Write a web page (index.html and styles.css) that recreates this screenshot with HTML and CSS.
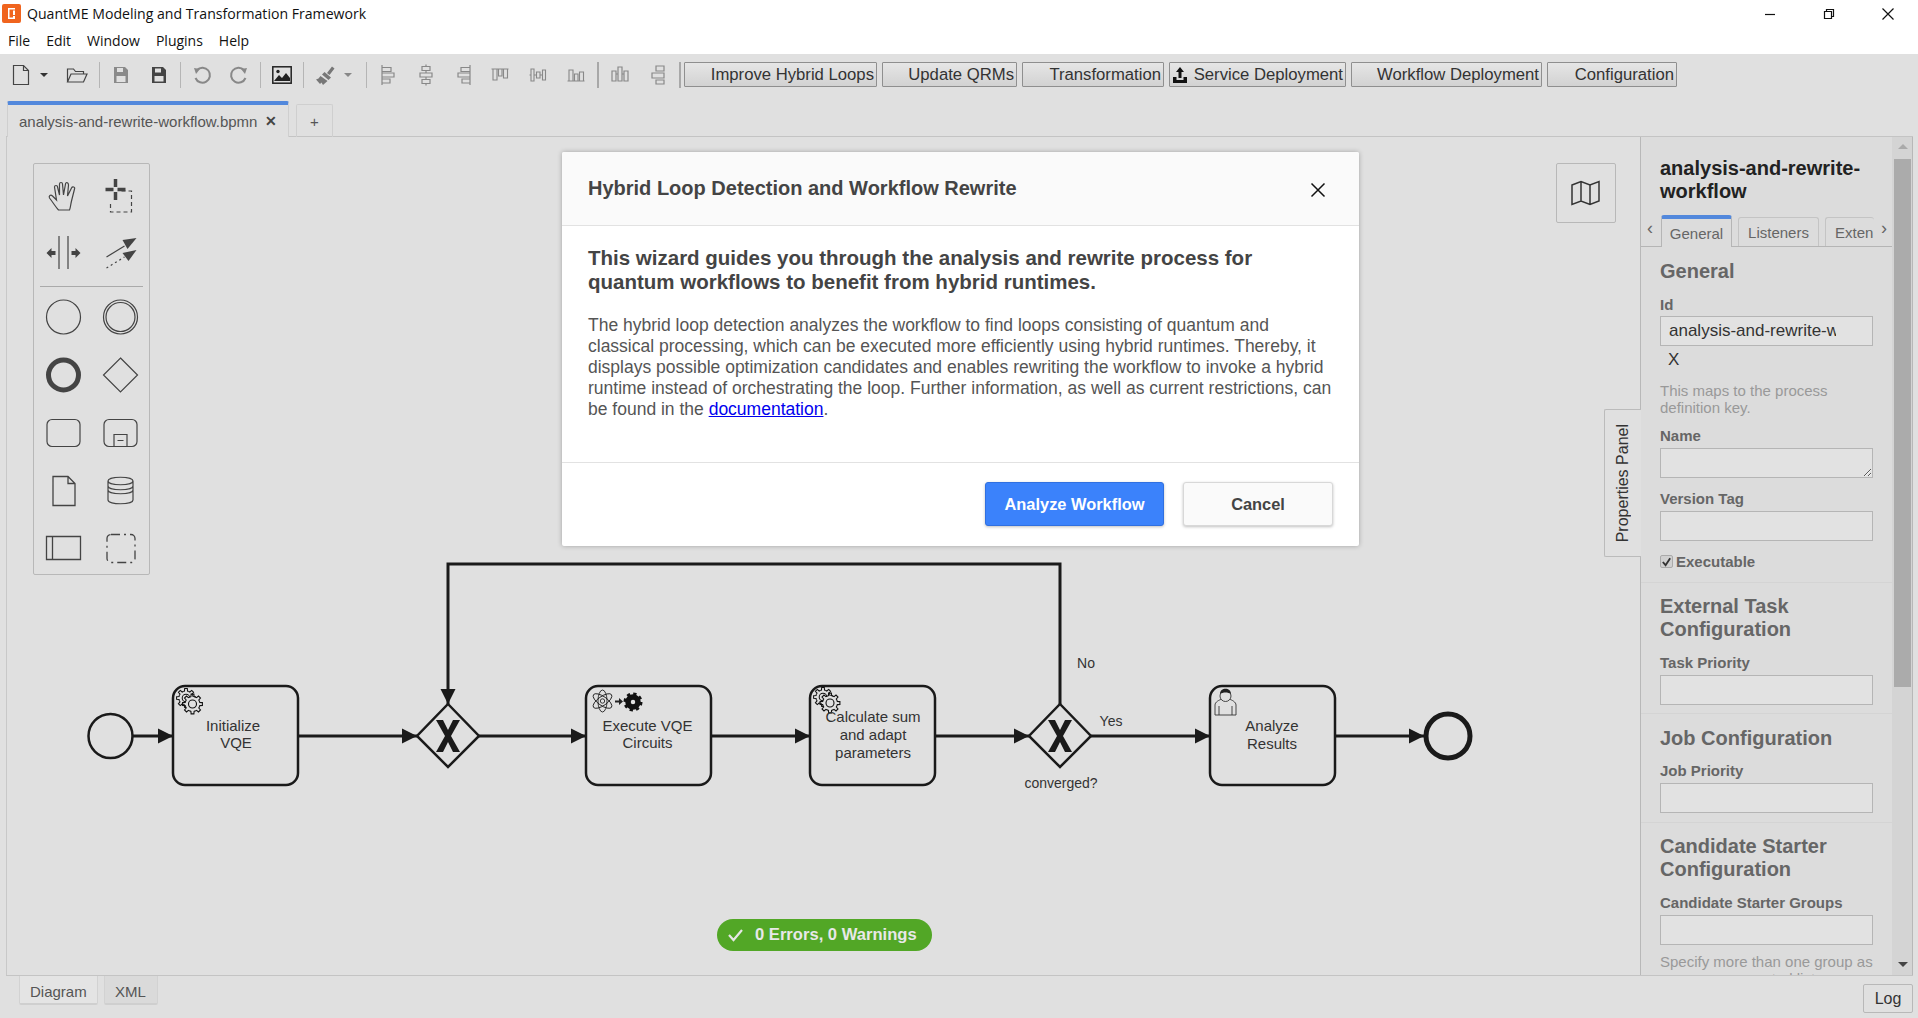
FILE: index.html
```html
<!DOCTYPE html>
<html lang="en">
<head>
<meta charset="utf-8">
<title>QuantME Modeling and Transformation Framework</title>
<link rel="stylesheet" href="styles.css">
</head>
<body>
<div class="app">
  <header class="titlebar">
    <svg class="app-icon" width="19" height="19" viewBox="0 0 19 19"><rect width="19" height="19" rx="2" fill="#f0641e"/><path d="M6 4h7v1.500H7.500v8H13V15H6z" fill="#fff"/><path d="M11 6.500h2V11h-2zM11 12h2v2h-2z" fill="#fff"/></svg>
    <span class="title-text">QuantME Modeling and Transformation Framework</span>
    <div class="win-controls">
      <span class="win-btn"><svg width="14" height="14" viewBox="0 0 14 14"><path d="M2 7.500h10" stroke="#111" stroke-width="1.200"/></svg></span>
      <span class="win-btn"><svg width="14" height="14" viewBox="0 0 14 14"><path d="M2.500 4.500h7v7h-7zM4.500 4.500v-2h7v7h-2" fill="none" stroke="#111" stroke-width="1.200"/></svg></span>
      <span class="win-btn"><svg width="14" height="14" viewBox="0 0 14 14"><path d="M1.500 1.500l11 11M12.500 1.500l-11 11" stroke="#111" stroke-width="1.200"/></svg></span>
    </div>
  </header>
  <nav class="menubar"><span>File</span><span>Edit</span><span>Window</span><span>Plugins</span><span>Help</span></nav>

  <div class="toolbar">
    <span class="ti ti-new"><svg width="18" height="22" viewBox="0 0 18 22"><path d="M1.500 1.500h10l5 5v14h-15z" fill="none" stroke="#444" stroke-width="1.200"/><path d="M11.500 1.500v5h5" fill="none" stroke="#444" stroke-width="1.200"/></svg></span>
    <span class="caret"></span>
    <span class="ti ti-open"><svg width="22" height="18" viewBox="0 0 22 18"><path d="M1.500 16V3h6l2 2.500h8V8M1.500 16l3.500-8h16l-3.500 8z" fill="none" stroke="#444" stroke-width="1.200"/></svg></span>
    <span class="sep"></span>
    <span class="ti"><svg width="16" height="18" viewBox="0 0 16 18"><path d="M1 1h11l3 3v13H1z" fill="#8a8a8a"/><path d="M4 2h6v4H4zM3.500 10h9v6h-9z" fill="#e0e0e0"/></svg></span>
    <span class="ti"><svg width="16" height="18" viewBox="0 0 16 18"><path d="M1 1h11l3 3v13H1z" fill="#444"/><path d="M4 2.500h6v4H4zM3.500 10h9v5.500h-9z" fill="#e0e0e0"/></svg></span>
    <span class="sep"></span>
    <span class="ti"><svg width="20" height="20" viewBox="0 0 20 20"><path d="M5 5a7.500 7.500 0 1 1-1.500 8" fill="none" stroke="#888" stroke-width="2"/><path d="M2 3l6 1-4 5z" fill="#888"/></svg></span>
    <span class="ti ti-redo"><svg width="20" height="20" viewBox="0 0 20 20"><path d="M15 5a7.500 7.500 0 1 0 1.500 8" fill="none" stroke="#888" stroke-width="2"/><path d="M18 3l-6 1 4 5z" fill="#888"/></svg></span>
    <span class="sep"></span>
    <span class="ti"><svg width="20" height="18" viewBox="0 0 20 18"><rect x=".800" y=".800" width="18.400" height="16.400" fill="#e0e0e0" stroke="#222" stroke-width="1.500"/><path d="M2 15l5-6 3 3 4-5 4 5v3z" fill="#222"/><circle cx="6" cy="5.500" r="1.700" fill="#222"/></svg></span>
    <span class="sep"></span>
    <span class="ti"><svg width="20" height="20" viewBox="0 0 20 20"><path d="M12 8L17 1.500l2.500 2L14.500 10zM9.500 7l6.500 5.500-2.500 2.500L7 9.500zM5.500 11l7 5-4.500 4-1.500-2.500-1.500 1.500-4-4.500 2.500-1z" fill="#777"/></svg></span>
    <span class="caret caret-gray"></span>
    <span class="sep sep-wide"></span>
    <span class="ti"><svg width="14" height="22" viewBox="0 0 14 22"><path d="M1 1v20M1 3.500h9v4H1M1 9h12v4H1M1 15h8v4H1" fill="none" stroke="#888" stroke-width="1.200"/></svg></span>
    <span class="ti"><svg width="14" height="22" viewBox="0 0 14 22"><path d="M3 2.500h8v4H3zM1 9h12v4H1zM3 15.500h8v4H3zM7 .5v2M7 6.500V9M7 13v2.500M7 19.500v2" fill="none" stroke="#888" stroke-width="1.200"/></svg></span>
    <span class="ti"><svg width="14" height="22" viewBox="0 0 14 22"><path d="M13 1v20M13 3.500H4v4h9M13 9H1v4h12M13 15H5v4h8" fill="none" stroke="#888" stroke-width="1.200"/></svg></span>
    <span class="ti ti-dist"><svg width="18" height="14" viewBox="0 0 18 14"><path d="M.5 1h17M2 1v11h4V1M7.500 1v7h3.500V1M12.500 1v9h4V1" fill="none" stroke="#888" stroke-width="1.100"/></svg></span>
    <span class="ti"><svg width="18" height="14" viewBox="0 0 18 14"><path d="M2 1h3v12H2zM7.500 4H11v6H7.500zM13.500 2h3v10h-3zM.5 7h1.500M5 7h2.500M11 7h2.500" fill="none" stroke="#888" stroke-width="1.100"/></svg></span>
    <span class="ti"><svg width="18" height="14" viewBox="0 0 18 14"><path d="M.5 13h17M2 13V2h4v11M7.500 13V6h3.500v7M12.500 13V4h4v9" fill="none" stroke="#888" stroke-width="1.100"/></svg></span>
    <span class="sep sep-alt"></span>
    <span class="ti"><svg width="18" height="18" viewBox="0 0 18 18"><path d="M1 5h4v10H1zM7 1h4v14H7zM13 5h4v10h-4zM5 8h2M11 8h2" fill="none" stroke="#888" stroke-width="1.200"/></svg></span>
    <span class="ti"><svg width="14" height="20" viewBox="0 0 14 20"><path d="M5 1h8v5H5zM1 8h12v5H1zM5 15h8v4H5z" fill="none" stroke="#888" stroke-width="1.200"/></svg></span>
    <span class="sep sep-alt sep-last"></span>
    <button class="tool-btn btn-hybrid">Improve Hybrid Loops</button>
    <button class="tool-btn btn-qrm">Update QRMs</button>
    <button class="tool-btn btn-trans">Transformation</button>
    <button class="tool-btn btn-service"><svg width="16" height="18" viewBox="0 0 16 18"><path d="M8 1l4 5H9.500v6h-3V6H4zM1 11h3.500v3h7v-3H15v6H1z" fill="#111"/></svg>Service Deployment</button>
    <button class="tool-btn btn-work">Workflow Deployment</button>
    <button class="tool-btn btn-conf">Configuration</button>
  </div>

  <div class="tabbar">
    <div class="tab tab-active"><span>analysis-and-rewrite-workflow.bpmn</span><span class="tab-close">✕</span></div>
    <div class="tab tab-plus">+</div>
  </div>

  <main class="workspace">
    <section class="canvas">
      <svg class="diagram" viewBox="6 137 1635 838" width="1635" height="838">
        <defs>
          <path id="seg" d="M-2.900-6.900L-1.600-7.300-1.400-9.900H1.400L1.600-7.300 2.900-6.900"/>
          <g id="gear" fill="none" stroke="#111" stroke-width="1.100">
            <circle r="7.300" fill="#e0e0e0" stroke="none"/>
            <use href="#seg"/><use href="#seg" transform="rotate(45)"/><use href="#seg" transform="rotate(90)"/><use href="#seg" transform="rotate(135)"/><use href="#seg" transform="rotate(180)"/><use href="#seg" transform="rotate(225)"/><use href="#seg" transform="rotate(270)"/><use href="#seg" transform="rotate(315)"/>
            <circle r="4"/>
          </g>
          <g id="arrow"><path d="M0 0l-15-7.500v15z" fill="#1a1a1a"/></g>
        </defs>
        <g fill="none" stroke="#1a1a1a" stroke-width="3">
          <path d="M133 736H173M298 736H417M479 736H586M711 736H810M935 736H1029M1091 736H1210M1335 736H1424"/>
          <path d="M1060 704V564H448V704"/>
        </g>
        <use href="#arrow" transform="translate(173,736)"/>
        <use href="#arrow" transform="translate(417,736)"/>
        <use href="#arrow" transform="translate(586,736)"/>
        <use href="#arrow" transform="translate(810,736)"/>
        <use href="#arrow" transform="translate(1029,736)"/>
        <use href="#arrow" transform="translate(1210,736)"/>
        <use href="#arrow" transform="translate(1424,736)"/>
        <use href="#arrow" transform="translate(448,704) rotate(90)"/>
        <circle cx="110.500" cy="736" r="22" fill="#e0e0e0" stroke="#1a1a1a" stroke-width="2.500"/>
        <circle cx="1448" cy="736" r="22" fill="#e0e0e0" stroke="#1a1a1a" stroke-width="5"/>
        <g fill="#e0e0e0" stroke="#1a1a1a" stroke-width="2.500">
          <rect x="173" y="686" width="125" height="99" rx="12"/>
          <rect x="586" y="686" width="125" height="99" rx="12"/>
          <rect x="810" y="686" width="125" height="99" rx="12"/>
          <rect x="1210" y="686" width="125" height="99" rx="12"/>
          <path d="M448 704l31 32-31 31-31-31z"/>
          <path d="M1060 704l31 32-31 31-31-31z"/>
        </g>
        <path d="M436 720h7l5 10 5-10h7l-9 16 9 16h-7l-5-10-5 10h-7l9-16zM1048 720h7l5 10 5-10h7l-9 16 9 16h-7l-5-10-5 10h-7l9-16z" fill="#1a1a1a"/>
        <use href="#gear" transform="translate(186,698) scale(.95)"/>
        <use href="#gear" transform="translate(192.500,704)"/>
        <use href="#gear" transform="translate(823,697) scale(.95)"/>
        <use href="#gear" transform="translate(830,703)"/>
        <g fill="none" stroke="#222" stroke-width=".9">
          <ellipse cx="602.500" cy="701" rx="11" ry="4.500" transform="rotate(35 602.500 701)"/>
          <ellipse cx="602.500" cy="701" rx="11" ry="4.500" transform="rotate(-35 602.500 701)"/>
          <ellipse cx="602.500" cy="701" rx="4.500" ry="11"/>
          <circle cx="602.500" cy="701" r="2.200"/>
        </g>
        <path d="M615 700.500h4v-2.500l4 3.500-4 3.500v-2.500h-4z" fill="#222"/>
        <g fill="none" stroke="#111" transform="translate(633,702)">
          <circle r="5" stroke-width="5.500"/>
          <circle r="8" stroke-dasharray="3.200 3.080" stroke-width="3"/>
        </g>
        <g fill="none" stroke="#333" stroke-width=".9">
          <path d="M1215 715v-10c0-3 4-5 7-6h7c3 1 7 3 7 6v10zM1219 706v9M1232 706v9"/>
          <circle cx="1225.500" cy="696" r="5.500" fill="#e0e0e0"/>
        </g>
        <path d="M1220 694c0-7 11-7 11 0-3-2-8-2-11 0z" fill="#222"/>
        <g class="task-label">
          <text x="233" y="731">Initialize</text><text x="236" y="748">VQE</text>
          <text x="647.500" y="731">Execute VQE</text><text x="647.500" y="748">Circuits</text>
          <text x="873" y="722">Calculate sum</text><text x="873" y="740">and adapt</text><text x="873" y="758">parameters</text>
          <text x="1272" y="731">Analyze</text><text x="1272" y="749">Results</text>
        </g>
        <g class="flow-label">
          <text x="1086" y="668">No</text><text x="1111" y="726">Yes</text><text x="1061" y="788">converged?</text>
        </g>
      </svg>

      <div class="palette">
        <div class="pal-row">
          <svg width="46" height="46" viewBox="0 0 46 46"><path d="M18 38c-3-3-5-7-9-12-1-2 1-4 3-2l4 4-2-13c0-2 3-2 3 0l2 8V12c0-2 3-2 3 0l1 11 2-11c0-2 3-2 3 1l-1 11 4-8c1-2 4-1 3 1l-3 12c-1 4-1 7-2 9z" fill="none" stroke="#444" stroke-width="1.200"/></svg>
          <svg width="46" height="46" viewBox="0 0 46 46"><path d="M18 7v8M18 20v8M8 17.500h8M20 17.500h8" stroke="#444" stroke-width="3.500"/><path d="M24 19h10v21H13V30" fill="none" stroke="#444" stroke-width="1.200" stroke-dasharray="4 3"/></svg>
        </div>
        <div class="pal-row">
          <svg width="46" height="46" viewBox="0 0 46 46"><path d="M18.500 6v33M27.500 6v33" stroke="#444" stroke-width="1.200"/><path d="M6 23l5-5v3h4v4h-4v3zM40 23l-5-5v3h-4v4h4v3z" fill="#444"/></svg>
          <svg width="46" height="46" viewBox="0 0 46 46"><path d="M9 27l18-11" stroke="#444" stroke-width="1.200"/><path d="M39 8l-14 2 5 9z" fill="#444"/><path d="M9 38l18-11" stroke="#444" stroke-width="1.200" stroke-dasharray="2 3"/><path d="M39 20l-14 3 6 8z" fill="#444"/></svg>
        </div>
        <div class="pal-sep"></div>
        <div class="pal-row">
          <svg width="46" height="46" viewBox="0 0 46 46"><circle cx="23" cy="23" r="17" fill="none" stroke="#444" stroke-width="1.200"/></svg>
          <svg width="46" height="46" viewBox="0 0 46 46"><circle cx="23" cy="23" r="17" fill="none" stroke="#444" stroke-width="1.200"/><circle cx="23" cy="23" r="14.500" fill="none" stroke="#444" stroke-width="1.200"/></svg>
        </div>
        <div class="pal-row">
          <svg width="46" height="46" viewBox="0 0 46 46"><circle cx="23" cy="23" r="15" fill="none" stroke="#444" stroke-width="5"/></svg>
          <svg width="46" height="46" viewBox="0 0 46 46"><path d="M23 6l17 17-17 17L6 23z" fill="none" stroke="#444" stroke-width="1.200"/></svg>
        </div>
        <div class="pal-row">
          <svg width="46" height="46" viewBox="0 0 46 46"><rect x="6.500" y="9.500" width="33" height="27" rx="5" fill="none" stroke="#444" stroke-width="1.200"/></svg>
          <svg width="46" height="46" viewBox="0 0 46 46"><rect x="6.500" y="9.500" width="33" height="27" rx="5" fill="none" stroke="#444" stroke-width="1.200"/><path d="M16.500 36.500v-12h13v12M20 30.500h6" fill="none" stroke="#444" stroke-width="1.200"/></svg>
        </div>
        <div class="pal-row">
          <svg width="46" height="46" viewBox="0 0 46 46"><path d="M12.500 8.500h15l7 7v22h-22zM27.500 8.500v7h7" fill="none" stroke="#444" stroke-width="1.300"/></svg>
          <svg width="46" height="46" viewBox="0 0 46 46"><path d="M10.500 13c0-5 25-5 25 0v19c0 5-25 5-25 0zM10.500 13c0 5 25 5 25 0M10.500 18c0 5 25 5 25 0M10.500 22c0 5 25 5 25 0" fill="none" stroke="#444" stroke-width="1.200"/></svg>
        </div>
        <div class="pal-row pal-row-last">
          <svg width="46" height="46" viewBox="0 0 46 46"><path d="M6 11.500h34v23H6zM12 11.500v23" fill="none" stroke="#444" stroke-width="1.300"/></svg>
          <svg width="46" height="46" viewBox="0 0 46 46"><rect x="9.500" y="9.500" width="28" height="28" rx="4" fill="none" stroke="#444" stroke-width="1.300" stroke-dasharray="9 4 2 4"/></svg>
        </div>
      </div>

      <div class="map-btn"><svg width="32" height="26" viewBox="0 0 32 26"><path d="M2 5l9-3.500 9 3.500 9-3.500V21l-9 3.500-9-3.500-9 3.500zM11 1.500V21M20 5v19.500" fill="none" stroke="#333" stroke-width="1.500"/></svg></div>

      <div class="status-badge"><svg width="18" height="14" viewBox="0 0 18 14"><path d="M2 7l4.500 5L15 2" fill="none" stroke="#e6e6e6" stroke-width="2.200"/></svg><span>0 Errors, 0 Warnings</span></div>

      <div class="panel-toggle"><span>Properties Panel</span></div>
    </section>

    <aside class="props">
      <div class="props-scroll">
        <div class="props-title">analysis-and-rewrite-workflow</div>
        <div class="props-tabs">
          <span class="ptab-arrow">‹</span>
          <span class="ptab ptab-active">General</span>
          <span class="ptab">Listeners</span>
          <span class="ptab ptab-cut">Exten</span>
          <span class="ptab-arrow ptab-arrow-r">›</span>
        </div>
        <div class="group group-general">
          <h3 class="group-title">General</h3>
          <label class="fld-label fld-id-label">Id</label>
          <input class="fld" type="text" value="analysis-and-rewrite-workflow">
          <div class="fld-x">X</div>
          <p class="fld-help">This maps to the process definition key.</p>
          <label class="fld-label fld-next">Name</label>
          <textarea class="fld fld-area"></textarea>
          <label class="fld-label fld-ver">Version Tag</label>
          <input class="fld" type="text">
          <div class="check-row"><span class="check-box"><svg width="12" height="12" viewBox="0 0 12 12"><path d="M2 6l3 3.500L10 2" fill="none" stroke="#333" stroke-width="2"/></svg></span><span>Executable</span></div>
        </div>
        <div class="group group-task">
          <h3 class="group-title">External Task Configuration</h3>
          <label class="fld-label fld-task-label">Task Priority</label>
          <input class="fld" type="text">
        </div>
        <div class="group group-job">
          <h3 class="group-title">Job Configuration</h3>
          <label class="fld-label fld-job-label">Job Priority</label>
          <input class="fld" type="text">
        </div>
        <div class="group group-cand">
          <h3 class="group-title">Candidate Starter Configuration</h3>
          <label class="fld-label fld-cand-label">Candidate Starter Groups</label>
          <input class="fld" type="text">
          <p class="fld-help fld-help-last">Specify more than one group as a comma separated list.</p>
        </div>
      </div>
      <div class="scrollbar">
        <span class="sb-up"></span>
        <div class="sb-thumb"></div>
        <span class="sb-down"></span>
      </div>
    </aside>
  </main>

  <footer class="footer">
    <div class="view-tab view-tab-on">Diagram</div>
    <div class="view-tab">XML</div>
    <button class="log-btn">Log</button>
  </footer>
</div>

<div class="dialog">
  <div class="dialog-head">
    <h2>Hybrid Loop Detection and Workflow Rewrite</h2>
    <svg class="dialog-x" width="16" height="16" viewBox="0 0 16 16"><path d="M1.500 1.500l13 13M14.500 1.500l-13 13" stroke="#111" stroke-width="1.500"/></svg>
  </div>
  <div class="dialog-body">
    <h4>This wizard guides you through the analysis and rewrite process for quantum workflows to benefit from hybrid runtimes.</h4>
    <p>The hybrid loop detection analyzes the workflow to find loops consisting of quantum and classical processing, which can be executed more efficiently using hybrid runtimes. Thereby, it displays possible optimization candidates and enables rewriting the workflow to invoke a hybrid runtime instead of orchestrating the loop. Further information, as well as current restrictions, can be found in the <a href="#">documentation</a>.</p>
  </div>
  <div class="dialog-foot">
    <button class="dlg-btn dlg-primary">Analyze Workflow</button>
    <button class="dlg-btn dlg-cancel">Cancel</button>
  </div>
</div>
</body>
</html>
```

FILE: styles.css
```css
* { box-sizing: border-box; }
html, body { margin: 0; height: 100%; overflow: hidden; }
body { background: #e0e0e0; font-family: "Liberation Sans", Arial, sans-serif; color: #333; }
.app { display: flex; flex-direction: column; height: 1018px; width: 1918px; }

.titlebar { height: 27px; background: #fff; display: flex; align-items: center; flex: none; }
.app-icon { margin: 0 6px 0 2px; flex: none; }
.title-text { font: 14.100px "Open Sans", sans-serif; color: #111; }
.win-controls { margin-left: auto; display: flex; padding-right: 1px; }
.win-btn { width: 59px; display: flex; justify-content: center; }

.menubar { height: 27px; background: #fff; display: flex; gap: 16px; align-items: center; padding-left: 8px; font: 14px "Open Sans", sans-serif; color: #111; flex: none; }

.toolbar { height: 41px; flex: none; display: flex; align-items: center; }
.ti { width: 38px; height: 30px; display: flex; align-items: center; justify-content: center; flex: none; }
.ti-new { width: 30px; margin-left: 6px; }
.ti-open { margin-right: 1px; }
.ti-redo { margin-left: -1px; }
.ti-dist { margin-left: -2px; }
.caret { width: 0; height: 0; border: 4px solid transparent; border-top-color: #333; border-bottom: 0; margin: 0 10px 0 4px; flex: none; }
.caret-gray { border-top-color: #888; margin: 0; }
.sep { width: 1px; height: 26px; background: #b5b5b5; margin: 0 2px; flex: none; }
.sep-wide { margin-left: 14px; }
.sep-alt { background: #a8a8a8; width: 2px; margin: 0 2px; }
.sep-last { margin: 0 3px 0 2px; }
.tool-btn { height: 25px; flex: none; margin-right: 5px; padding: 0 2px 0 0; border: 1px solid #8f8f8f; border-radius: 1px; background: linear-gradient(#e6e6e6, #d2d2d2); font: 16.700px "Liberation Sans", Arial, sans-serif; color: #333; display: flex; align-items: center; justify-content: flex-end; white-space: nowrap; }
.btn-hybrid { width: 193px; }
.btn-qrm { width: 135px; }
.btn-trans { width: 142px; }
.btn-service { width: 177px; justify-content: space-between; padding-left: 2px; }
.btn-work { width: 191px; }
.btn-conf { width: 130px; }

.tabbar { height: 42px; flex: none; display: flex; align-items: flex-end; padding-left: 7px; gap: 7px; position: relative; z-index: 2; margin-bottom: -1px; }
.tab { height: 33px; border: 1px solid #cfcfcf; border-bottom: 0; border-radius: 2px 2px 0 0; font-size: 15px; color: #555; display: flex; align-items: center; }
.tab-active { width: 282px; height: 36px; border-top: 4px solid #5288dc; background: #e0e0e0; padding-left: 11px; gap: 8px; }
.tab-close { font-size: 14px; font-weight: bold; color: #444; }
.tab-plus { width: 37px; justify-content: center; }

.workspace { flex: 1; min-height: 0; display: flex; margin: 0 5px 0 6px; border-top: 1px solid #c4c4c4; border-bottom: 1px solid #c4c4c4; position: relative; }
.canvas { flex: 1; min-width: 0; position: relative; border-left: 1px solid #c8c8c8; }
.diagram { position: absolute; left: -1px; top: 0; }
.task-label text { font: 15px "Liberation Sans", Arial, sans-serif; fill: #333; text-anchor: middle; }
.flow-label text { font: 14px "Liberation Sans", Arial, sans-serif; fill: #333; text-anchor: middle; }

.palette { position: absolute; left: 26px; top: 26px; width: 117px; height: 412px; border: 1px solid #b8b8b8; border-radius: 2px; padding: 2px 1px 0 1px; }
.pal-row { height: 58px; display: flex; align-items: center; }
.pal-row-last { height: 56px; }
.pal-row svg { width: 57px; flex: none; }
.pal-sep { height: 1px; background: #aaa; margin: 4px 5px 1px 5px; }

.map-btn { position: absolute; left: 1549px; top: 26px; width: 60px; height: 60px; border: 1px solid #b8b8b8; border-radius: 2px; display: flex; align-items: center; justify-content: center; }

.status-badge { position: absolute; left: 710px; top: 782px; width: 215px; height: 32px; border-radius: 16px; background: #52a726; color: #e8e8e8; font-size: 16.600px; font-weight: bold; display: flex; align-items: center; padding-left: 10px; gap: 10px; }

.panel-toggle { position: absolute; right: -1px; top: 272px; width: 37px; height: 148px; background: #e0e0e0; border: 1px solid #bbb; border-right: 0; border-radius: 2px 0 0 2px; display: flex; align-items: center; justify-content: center; z-index: 3; }
.panel-toggle span { writing-mode: vertical-rl; transform: rotate(180deg); font-size: 16px; color: #333; white-space: nowrap; }

.props { width: 273px; flex: none; display: flex; background: #dcdcdc; border-left: 1px solid #b8b8b8; border-right: 1px solid #b8b8b8; }
.props-scroll { width: 251px; overflow: hidden; flex: none; }
.props-title { font-size: 20px; font-weight: bold; line-height: 23px; color: #222; margin: 20px 15px 0 19px; }
.props-tabs { height: 31px; margin-top: 13px; border-bottom: 1px solid #b5b5b5; position: relative; display: flex; align-items: flex-end; padding-left: 20px; gap: 6px; }
.ptab { height: 29px; border: 1px solid #c4c4c4; border-bottom: 0; border-radius: 3px 3px 0 0; font-size: 15px; color: #666; display: flex; align-items: center; justify-content: center; width: 81px; }
.ptab-active { width: 71px; height: 32px; border-color: #b5b5b5 #b5b5b5 #dcdcdc; border-top: 4px solid #5288dc; background: #dcdcdc; margin-bottom: -1px; }
.ptab-cut { width: 49px; overflow: hidden; border-right: 0; justify-content: flex-start; padding-left: 9px; }
.ptab-arrow { position: absolute; left: 6px; top: 2px; font-size: 18px; color: #666; }
.ptab-arrow-r { left: 240px; }

.group { padding: 12px 19px 8px; border-bottom: 1px solid #d4d4d4; }
.group-general { padding-top: 13px; padding-bottom: 12px; }
.group-job { padding-top: 13px; padding-bottom: 9px; }
.group-title { margin: 0; font-size: 20px; font-weight: bold; line-height: 23px; color: #666; }
.fld-label { display: block; font-size: 15px; font-weight: bold; line-height: 17px; color: #666; }
.fld-id-label { margin-top: 13px; margin-bottom: 3px; }
.fld-task-label { margin-top: 13px; margin-bottom: 4px; }
.fld-job-label { margin-top: 12px; margin-bottom: 4px; }
.fld-cand-label { margin-top: 13px; margin-bottom: 4px; }
.fld { display: block; width: 213px; height: 30px; background: #e2e2e2; border: 1px solid #b5b5b5; border-radius: 0; margin: 0; padding: 0 36px 0 8px; font: 17px "Liberation Sans", Arial, sans-serif; color: #333; outline: 0; }
.fld-area { resize: both; }
.fld-x { font-size: 17px; line-height: 24px; margin: 2px 0 0 8px; color: #333; }
.fld-help { margin: 10px 0 0; font-size: 15px; line-height: 17px; color: #999; }
.fld-next { margin-top: 11px; margin-bottom: 4px; }
.fld-ver { margin-top: 12px; margin-bottom: 4px; }
.check-row { display: flex; align-items: center; gap: 3px; margin-top: 12px; font-size: 15px; font-weight: bold; color: #666; line-height: 17px; }
.check-box { width: 13px; height: 13px; border: 1px solid #aaa; border-radius: 2px; background: #d0d0d0; display: flex; align-items: center; justify-content: center; }
.fld-help-last { margin-top: 8px; }

.scrollbar { flex: 1; background: #d4d4d4; position: relative; padding-top: 22px; }
.sb-thumb { width: 17px; height: 528px; margin-left: 2px; background: #ababab; }
.sb-up, .sb-down { position: absolute; left: 6px; width: 0; height: 0; border: 5px solid transparent; }
.sb-up { top: 7px; border-bottom-color: #aaa; border-top: 0; }
.sb-down { bottom: 8px; border-top-color: #444; border-bottom: 0; }

.footer { height: 42px; flex: none; display: flex; align-items: flex-start; gap: 6px; padding: 0 5px 0 19px; position: relative; }
.view-tab { height: 29px; border: 1px solid #d2d2d2; border-top: 0; border-bottom: 2px solid #cfcfcf; font-size: 15px; color: #555; display: flex; align-items: center; padding: 3px 10px 0; border-radius: 0 0 2px 2px; }
.view-tab-on { width: 79px; background: #e4e4e4; }
.view-tab:not(.view-tab-on) { background: #dadada; width: 54px; }
.log-btn { margin: 8px 0 0 auto; width: 50px; height: 29px; border: 1px solid #b8b8b8; border-radius: 2px; background: #e0e0e0; font: 16px "Liberation Sans", Arial, sans-serif; color: #333; padding: 0; }

.dialog { position: absolute; left: 562px; top: 152px; width: 797px; height: 394px; background: #fff; border-radius: 2px; box-shadow: 0 0 5px rgba(0,0,0,.28); display: flex; flex-direction: column; }
.dialog-head { height: 74px; flex: none; background: #fafafa; border-bottom: 1px solid #e2e2e2; display: flex; align-items: center; padding: 0 33px 0 26px; border-radius: 2px 2px 0 0; justify-content: space-between; }
.dialog-head h2 { margin: 0; font-size: 20px; font-weight: bold; color: #444; }
.dialog-x { margin: 2px 0 0; }
.dialog-body { height: 237px; flex: none; padding: 20px 20px 0 26px; border-bottom: 1px solid #e2e2e2; }
.dialog-body h4 { margin: 0 0 21px; font-size: 20.500px; line-height: 24px; font-weight: bold; color: #444; }
.dialog-body p { margin: 0; font-size: 17.500px; line-height: 21px; color: #555; }
.dialog-body a { color: #0000ee; text-decoration: underline; }
.dialog-foot { flex: 1; display: flex; justify-content: flex-end; gap: 19px; padding: 19px 26px 0 0; }
.dlg-btn { height: 44px; border-radius: 3px; font: bold 16.400px "Liberation Sans", Arial, sans-serif; padding: 0; box-shadow: 0 1px 3px rgba(0,0,0,.25); }
.dlg-primary { width: 179px; background: #3b82fb; color: #fff; border: 1px solid #3070e0; }
.dlg-cancel { width: 150px; background: #fafafa; color: #444; border: 1px solid #d8d8d8; }
```
